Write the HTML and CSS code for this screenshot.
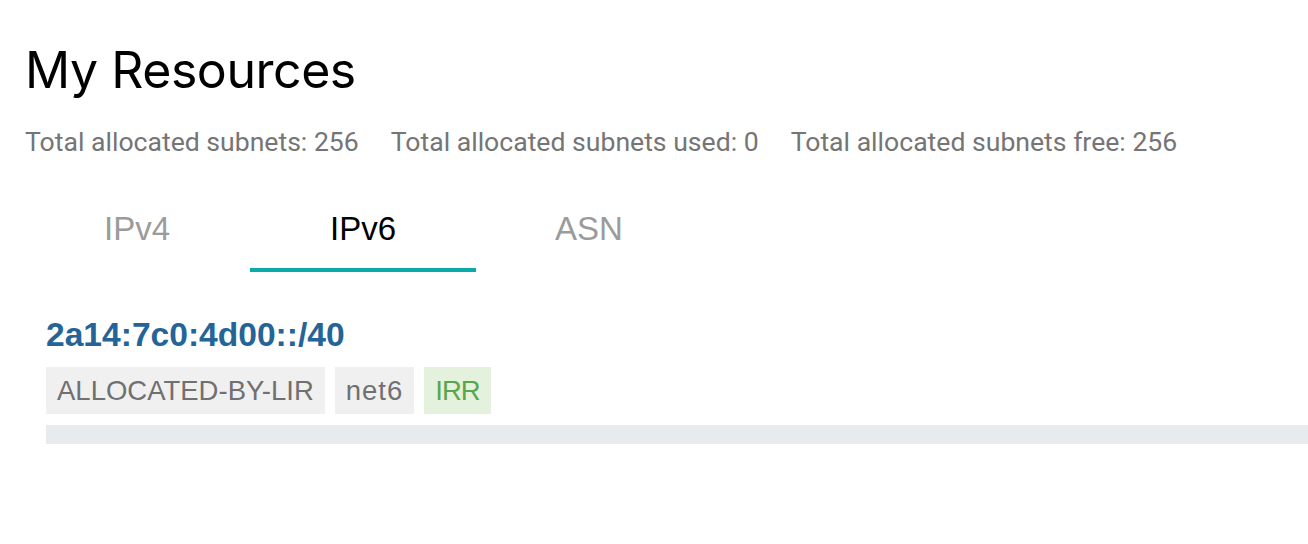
FILE: index.html
```html
<!DOCTYPE html>
<html>
<head>
<meta charset="utf-8">
<link rel="stylesheet" href="styles.css">
</head>
<body>
<main class="page">
  <h1 class="title">My Resources</h1>
  <div class="stats">
    <span class="stat">Total allocated subnets: 256</span>
    <span class="stat">Total allocated subnets used: 0</span>
    <span class="stat">Total allocated subnets free: 256</span>
  </div>
  <nav class="tabs">
    <div class="tab">IPv4</div>
    <div class="tab active">IPv6</div>
    <div class="tab">ASN</div>
  </nav>
  <section class="resource">
    <a class="prefix" href="#">2a14:7c0:4d00::/40</a>
    <div class="tags">
      <span class="tag">ALLOCATED-BY-LIR</span>
      <span class="tag tag-wide">net6</span>
      <span class="tag tag-green">IRR</span>
    </div>
    <div class="bar"></div>
  </section>
</main>
</body>
</html>
```

FILE: styles.css
```css
html, body {
  margin: 0;
  padding: 0;
  background: #ffffff;
}
.page {
  padding: 40px 0 0 25px;
  font-family: "Liberation Sans", Arial, sans-serif;
}
.title {
  margin: 0;
  font-family: Inter, "Liberation Sans", sans-serif;
  font-weight: 400;
  font-size: 50px;
  line-height: 60px;
  color: #000;
  letter-spacing: -0.45px;
}
.stats {
  display: flex;
  gap: 32px;
  margin-top: 27px;
  font-family: Roboto, "Liberation Sans", sans-serif;
  font-size: 26.6px;
  line-height: 30px;
  color: #757575;
}
.tabs {
  display: flex;
  margin-top: 37px;
  margin-left: -1px;
}
.tab {
  width: 226px;
  height: 78px;
  box-sizing: border-box;
  padding-top: 18px;
  text-align: center;
  font-size: 33px;
  line-height: 34px;
  color: #9b9b9b;
  border-bottom: 4px solid transparent;
}
.tab.active {
  color: #000;
  border-bottom-color: #0aaaa8;
}
.resource {
  margin-left: 21px;
  margin-top: 45px;
}
.prefix {
  display: block;
  font-weight: 700;
  font-size: 33.6px;
  line-height: 36px;
  color: #246497;
  text-decoration: none;
}
.tags {
  display: flex;
  gap: 10px;
  margin-top: 14px;
}
.tag {
  background: #f0f0f0;
  color: #707070;
  font-size: 27.5px;
  line-height: 47px;
  padding: 0 11px;
}
.tag-wide {
  letter-spacing: 1px;
}
.tag-green {
  background: #e3f1dd;
  color: #5aa74b;
  letter-spacing: -1px;
}
.bar {
  margin-top: 11px;
  height: 19px;
  background: #e8ebee;
}
```
